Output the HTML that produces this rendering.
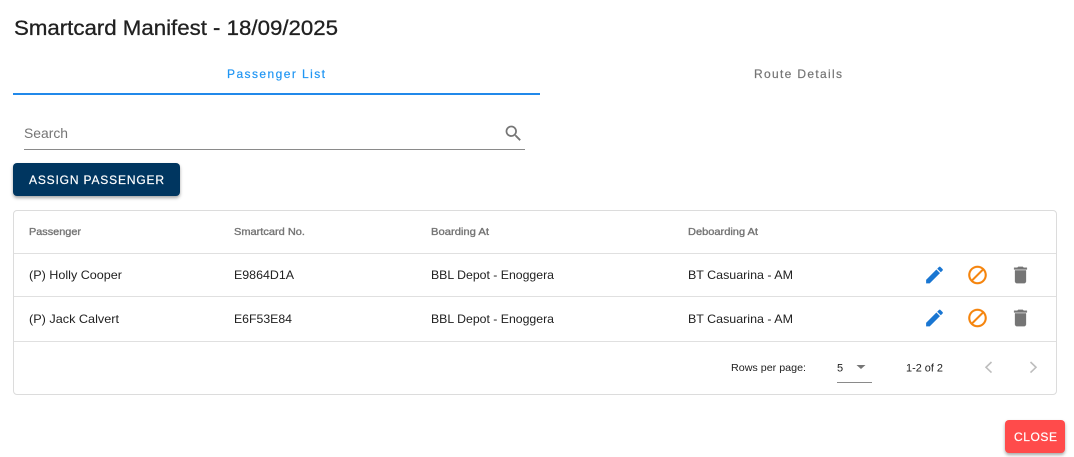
<!DOCTYPE html>
<html><head><meta charset="utf-8"><style>
html,body{margin:0;padding:0;background:#fff;width:1074px;height:457px;overflow:hidden}
svg{position:absolute;left:0;top:0}
.box{position:absolute}
text{font-family:"Liberation Sans",sans-serif}
</style></head><body>
<div class="box" style="left:13px;top:210px;width:1042px;height:183px;border:1px solid #dcdcdc;border-radius:4px"></div>
<div class="box" style="left:13px;top:163px;width:167px;height:33px;background:#003660;border-radius:4px;box-shadow:0 2px 3px rgba(0,0,0,.35)"></div>
<div class="box" style="left:1005px;top:420px;width:60px;height:33px;background:#ff4b4b;border-radius:4px;box-shadow:0 2px 3px rgba(0,0,0,.35)"></div>
<svg width="1074" height="457" viewBox="0 0 1074 457">
<text x="14" y="35" font-size="21" fill="#212121" stroke="#212121" stroke-width=".3" textLength="324" lengthAdjust="spacingAndGlyphs">Smartcard Manifest - 18/09/2025</text>
<text x="227" y="78" font-size="12" fill="#2196f3" stroke="#2196f3" stroke-width=".2" textLength="98" lengthAdjust="spacing">Passenger List</text>
<text x="754" y="78" font-size="12" fill="#757575" stroke="#757575" stroke-width=".2" textLength="88" lengthAdjust="spacing">Route Details</text>
<rect x="13" y="93" width="527" height="2" fill="#2189ea"/>
<text x="24" y="138" font-size="14" fill="#757575" textLength="44" lengthAdjust="spacingAndGlyphs">Search</text>
<rect x="24" y="149" width="501" height="1" fill="#8a8a8a"/>
<g transform="translate(503,123) scale(.87)"><path fill="#757575" d="M15.5 14h-.79l-.28-.27C15.41 12.59 16 11.11 16 9.5 16 5.91 13.09 3 9.5 3S3 5.91 3 9.5 5.91 16 9.5 16c1.61 0 3.09-.59 4.23-1.57l.27.28v.79l5 4.99L20.49 19l-4.99-5zm-6 0C7.01 14 5 11.99 5 9.5S7.01 5 9.5 5 14 7.01 14 9.5 11.99 14 9.5 14z"/></g>
<text x="29" y="184" font-size="12" fill="#fff" stroke="#fff" stroke-width=".2" textLength="135" lengthAdjust="spacing">ASSIGN PASSENGER</text>

<text x="29" y="235" font-size="10" fill="#757575" stroke="#757575" stroke-width=".35" textLength="52" lengthAdjust="spacingAndGlyphs">Passenger</text>
<text x="234" y="235" font-size="10" fill="#757575" stroke="#757575" stroke-width=".35" textLength="71" lengthAdjust="spacingAndGlyphs">Smartcard No.</text>
<text x="431" y="235" font-size="10" fill="#757575" stroke="#757575" stroke-width=".35" textLength="58" lengthAdjust="spacingAndGlyphs">Boarding At</text>
<text x="688" y="235" font-size="10" fill="#757575" stroke="#757575" stroke-width=".35" textLength="70" lengthAdjust="spacingAndGlyphs">Deboarding At</text>

<rect x="14" y="253" width="1042" height="1" fill="#e0e0e0"/>
<rect x="14" y="296" width="1042" height="1" fill="#e0e0e0"/>
<rect x="14" y="341" width="1042" height="1" fill="#e0e0e0"/>

<text x="29" y="279" font-size="12" fill="#212121" textLength="93" lengthAdjust="spacingAndGlyphs">(P) Holly Cooper</text>
<text x="234" y="279" font-size="12" fill="#212121" textLength="60" lengthAdjust="spacingAndGlyphs">E9864D1A</text>
<text x="431" y="279" font-size="12" fill="#212121" textLength="123" lengthAdjust="spacingAndGlyphs">BBL Depot - Enoggera</text>
<text x="688" y="279" font-size="12" fill="#212121" textLength="105" lengthAdjust="spacingAndGlyphs">BT Casuarina - AM</text>

<text x="29" y="323" font-size="12" fill="#212121" textLength="90" lengthAdjust="spacingAndGlyphs">(P) Jack Calvert</text>
<text x="234" y="323" font-size="12" fill="#212121" textLength="58" lengthAdjust="spacingAndGlyphs">E6F53E84</text>
<text x="431" y="323" font-size="12" fill="#212121" textLength="123" lengthAdjust="spacingAndGlyphs">BBL Depot - Enoggera</text>
<text x="688" y="323" font-size="12" fill="#212121" textLength="105" lengthAdjust="spacingAndGlyphs">BT Casuarina - AM</text>

<g transform="translate(923.5,264) scale(.9167)"><path fill="#1976d2" stroke="#1976d2" stroke-width=".3" d="M3 17.25V21h3.75L17.81 9.94l-3.75-3.75L3 17.25zM20.71 7.04c.39-.39.39-1.02 0-1.41l-2.34-2.34c-.39-.39-1.02-.39-1.41 0l-1.83 1.83 3.75 3.75 1.83-1.83z"/></g>
<g transform="translate(966.5,264) scale(.9167)"><path fill="#f5840c" stroke="#f5840c" stroke-width=".3" d="M12 2C6.48 2 2 6.48 2 12s4.48 10 10 10 10-4.48 10-10S17.52 2 12 2zM4 12c0-4.42 3.58-8 8-8 1.85 0 3.55.63 4.9 1.69L5.69 16.9C4.63 15.55 4 13.85 4 12zm8 8c-1.85 0-3.55-.63-4.9-1.69L18.31 7.1C19.37 8.45 20 10.15 20 12c0 4.42-3.58 8-8 8z"/></g>
<g transform="translate(1009.5,264) scale(.9167)"><path fill="#757575" stroke="#757575" stroke-width=".3" d="M6 19c0 1.1.9 2 2 2h8c1.1 0 2-.9 2-2V7H6v12zM19 4h-3.5l-1-1h-5l-1 1H5v2h14V4z"/></g>

<g transform="translate(923.5,307) scale(.9167)"><path fill="#1976d2" stroke="#1976d2" stroke-width=".3" d="M3 17.25V21h3.75L17.81 9.94l-3.75-3.75L3 17.25zM20.71 7.04c.39-.39.39-1.02 0-1.41l-2.34-2.34c-.39-.39-1.02-.39-1.41 0l-1.83 1.83 3.75 3.75 1.83-1.83z"/></g>
<g transform="translate(966.5,307) scale(.9167)"><path fill="#f5840c" stroke="#f5840c" stroke-width=".3" d="M12 2C6.48 2 2 6.48 2 12s4.48 10 10 10 10-4.48 10-10S17.52 2 12 2zM4 12c0-4.42 3.58-8 8-8 1.85 0 3.55.63 4.9 1.69L5.69 16.9C4.63 15.55 4 13.85 4 12zm8 8c-1.85 0-3.55-.63-4.9-1.69L18.31 7.1C19.37 8.45 20 10.15 20 12c0 4.42-3.58 8-8 8z"/></g>
<g transform="translate(1009.5,307) scale(.9167)"><path fill="#757575" stroke="#757575" stroke-width=".3" d="M6 19c0 1.1.9 2 2 2h8c1.1 0 2-.9 2-2V7H6v12zM19 4h-3.5l-1-1h-5l-1 1H5v2h14V4z"/></g>

<text x="731" y="371" font-size="10.5" fill="#212121" textLength="75" lengthAdjust="spacingAndGlyphs">Rows per page:</text>
<text x="837" y="371.5" font-size="11" fill="#212121">5</text>
<path d="M856.5 365h9l-4.5 4z" fill="#757575"/>
<rect x="837" y="382" width="35" height="1" fill="#8a8a8a"/>
<text x="906" y="371.5" font-size="11" fill="#212121" textLength="37" lengthAdjust="spacingAndGlyphs">1-2 of 2</text>
<path d="M991.5 362L986 367.3L991.5 372.6" fill="none" stroke="#bdbdbd" stroke-width="1.6"/>
<path d="M1030.5 362L1036 367.3L1030.5 372.6" fill="none" stroke="#bdbdbd" stroke-width="1.6"/>

<text x="1014" y="441" font-size="12" fill="#fff" stroke="#fff" stroke-width=".2" textLength="43" lengthAdjust="spacing">CLOSE</text>
</svg>
</body></html>
